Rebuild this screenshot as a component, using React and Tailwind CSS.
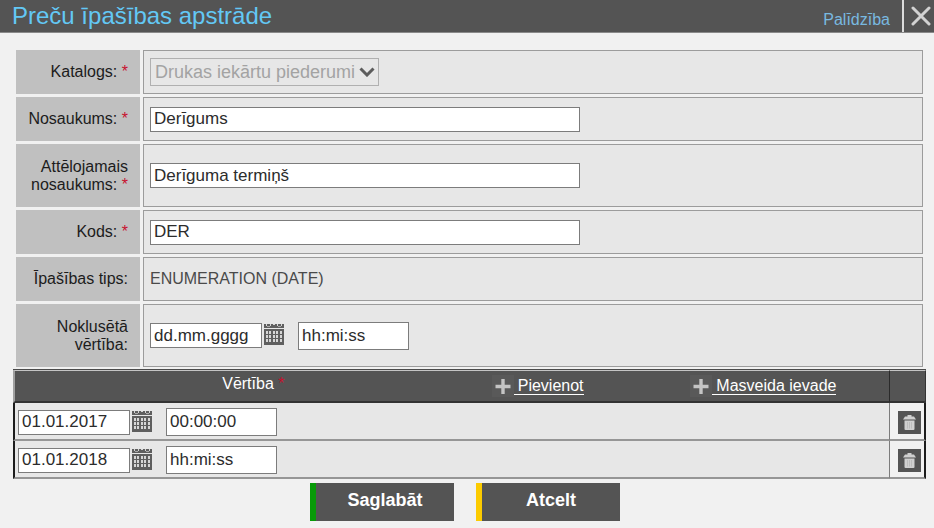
import { useState } from "react";

function CalendarIcon() {
  return (
    <svg width="20" height="21" viewBox="0 0 20 21" shapeRendering="crispEdges">
      <rect width="20" height="4" fill="#5f5f5f" />
      <g fill="#d6d6d6">
        <rect x="2" y="0" width="1" height="2" />
        <rect x="6" y="0" width="1" height="2" />
        <rect x="9" y="0" width="2" height="1" />
        <rect x="13" y="0" width="1" height="2" />
        <rect x="17" y="0" width="1" height="2" />
      </g>
      <g fill="#a8a8a8">
        <rect x="3" y="2" width="3" height="1" />
        <rect x="14" y="2" width="3" height="1" />
      </g>
      <rect x="0" y="5" width="20" height="16" fill="#5f5f5f" />
      <g fill="#d6d6d6">
        {[7, 11, 15].map((y) =>
          [2, 5, 9, 12, 16].map((x) => (
            <rect key={`${x}-${y}`} x={x} y={y} width="2" height="3" />
          ))
        )}
      </g>
    </svg>
  );
}

function PlusIcon() {
  return (
    <svg width="22" height="22" viewBox="0 0 22 22" className="shrink-0">
      <rect width="22" height="22" fill="#595959" />
      <path stroke="#c4c4c4" strokeWidth="3.4" d="M11 4v15M3.5 11.5h15" />
    </svg>
  );
}

function TrashIcon() {
  return (
    <svg width="23" height="23" viewBox="0 0 23 23">
      <rect width="23" height="23" fill="#545454" />
      <path fill="#d0d0d0" d="M9.500 4h4v1.500h2.500l2 3H5l2-3h2.500z" />
      <path fill="#d0d0d0" d="M6.500 9.500h10V18q0 1-1 1h-8q-1 0-1-1z" />
      <path stroke="#b8b8b8" strokeWidth="0.800" d="M9.500 11v6.500M11.500 11v6.500M13.500 11v6.500" />
    </svg>
  );
}

function CloseIcon() {
  return (
    <svg width="20" height="20" viewBox="0 0 20 20">
      <path
        stroke="#d2d2d2"
        strokeWidth="3"
        strokeLinecap="round"
        d="M2 2l16 16M18 2L2 18"
      />
    </svg>
  );
}

function Required() {
  return <span className="text-[#c8102e]">*</span>;
}

function Field({ id, label, required, tall, children }) {
  const height = tall ? "min-h-[63px]" : "min-h-11";
  return (
    <div className={`flex gap-[3px] ${height}`}>
      <div className="flex w-[124px] shrink-0 items-center justify-end bg-[#c0c0c0] pr-3 text-right text-base leading-[18px] text-[#1c1c1c]">
        <label htmlFor={id}>
          {label} {required && <Required />}
        </label>
      </div>
      <div className="flex flex-1 items-center border border-[#9c9c9c] bg-[#e7e7e7] px-1.5">
        {children}
      </div>
    </div>
  );
}

function TextInput({ id, value, onChange }) {
  return (
    <input
      id={id}
      type="text"
      value={value}
      onChange={(e) => onChange(e.target.value)}
      className="h-[25px] w-[430px] border border-[#7c7c7c] bg-white px-[3px] text-[17px] leading-5 text-[#2c2c2c]"
    />
  );
}

function DateTimeInput({ id, date, time, onChange, label }) {
  return (
    <div className="flex items-center">
      <input
        id={id}
        type="text"
        aria-label={label}
        value={date}
        onChange={(e) => onChange({ date: e.target.value, time })}
        className="h-[25px] w-28 border border-[#7c7c7c] bg-white px-[3px] text-[17px] leading-5 text-[#2c2c2c]"
      />
      <button type="button" aria-label="Kalendārs" className="mb-0.5 ml-0.5">
        <CalendarIcon />
      </button>
      <input
        type="text"
        aria-label="Laiks"
        value={time}
        onChange={(e) => onChange({ date, time: e.target.value })}
        className="ml-3.5 h-7 w-[111px] border border-[#7c7c7c] bg-white px-[3px] text-[17px] leading-5 text-[#2c2c2c]"
      />
    </div>
  );
}

function HeaderLink({ children }) {
  return (
    <div className="flex items-center">
      <PlusIcon />
      <a
        href="#"
        className="border-b border-white pl-1 text-base leading-[17px] text-white"
      >
        {children}
      </a>
    </div>
  );
}

function ActionButton({ accent, children }) {
  return (
    <button
      type="button"
      className={`h-[38px] w-36 border-l-6 bg-[#545454] pb-1 text-lg font-bold text-white ${accent}`}
    >
      {children}
    </button>
  );
}

function App() {
  const [name, setName] = useState("Derīgums");
  const [displayName, setDisplayName] = useState("Derīguma termiņš");
  const [code, setCode] = useState("DER");
  const [defaultValue, setDefaultValue] = useState({
    date: "dd.mm.gggg",
    time: "hh:mi:ss",
  });
  const [values, setValues] = useState([
    { id: 1, date: "01.01.2017", time: "00:00:00" },
    { id: 2, date: "01.01.2018", time: "hh:mi:ss" },
  ]);

  const updateValue = (id, next) => {
    setValues((prev) => prev.map((v) => (v.id === id ? { ...v, ...next } : v)));
  };

  const removeValue = (id) => {
    setValues((prev) => prev.filter((v) => v.id !== id));
  };

  return (
    <div className="min-h-screen bg-[#f1f1f1] font-['Liberation_Sans',Arial,sans-serif]">
      <header className="flex h-[33px] border-b border-[#8a8a8a] bg-[#545454]">
        <h1 className="flex-1 pl-3 text-2xl leading-8 text-[#63c8f5]">
          Preču īpašības apstrāde
        </h1>
        <a href="#" className="pt-2 pr-3 text-base text-[#79b9e0]">
          Palīdzība
        </a>
        <button
          type="button"
          aria-label="Aizvērt"
          className="flex w-8 items-center justify-end border-l-2 border-[#dcdcdc] pr-[3px]"
        >
          <CloseIcon />
        </button>
      </header>

      <form onSubmit={(e) => e.preventDefault()}>
        <div className="flex flex-col gap-[3px] pt-[17px] pr-[11px] pl-4">
          <Field id="catalog" label="Katalogs:" required>
            <div className="relative">
              <select
                id="catalog"
                disabled
                className="h-7 w-[229px] appearance-none border border-[#b0b0b0] bg-[#e7e7e7] pl-1 text-lg leading-5 text-[#a3a3a3]"
              >
                <option>Drukas iekārtu piederumi</option>
              </select>
              <svg
                width="16"
                height="10"
                viewBox="0 0 16 10"
                className="pointer-events-none absolute top-[9px] right-1"
              >
                <path fill="none" stroke="#5c5c5c" strokeWidth="3" d="M1.500 1.500L8 8l6.500-6.500" />
              </svg>
            </div>
          </Field>
          <Field id="name" label="Nosaukums:" required>
            <TextInput id="name" value={name} onChange={setName} />
          </Field>
          <Field id="display-name" label="Attēlojamais nosaukums:" required tall>
            <TextInput
              id="display-name"
              value={displayName}
              onChange={setDisplayName}
            />
          </Field>
          <Field id="code" label="Kods:" required>
            <TextInput id="code" value={code} onChange={setCode} />
          </Field>
          <Field id="type" label="Īpašības tips:">
            <output id="type" className="text-base text-[#4a4a4a]">
              ENUMERATION (DATE)
            </output>
          </Field>
          <Field id="default-date" label="Noklusētā vērtība:" tall>
            <DateTimeInput
              id="default-date"
              date={defaultValue.date}
              time={defaultValue.time}
              onChange={setDefaultValue}
            />
          </Field>
        </div>

        <div className="mt-0.5 pr-2 pl-[13px]">
          <table className="w-full border-separate border-spacing-0 border-t border-[#4a4a4a]">
            <thead>
              <tr className="bg-[#545454]">
                <th className="h-[33px] border-t border-b-2 border-l-2 border-t-[#c4c4c4] border-b-[#333333] border-l-[#a0a0a0] p-0 font-normal">
                  <div className="grid grid-cols-[12fr_5fr_5fr] items-center">
                    <span className="pb-1 text-base leading-5 text-white">
                      Vērtība <Required />
                    </span>
                    <HeaderLink>Pievienot</HeaderLink>
                    <HeaderLink>Masveida ievade</HeaderLink>
                  </div>
                </th>
                <th
                  aria-label="Dzēst"
                  className="w-[37px] border-t border-r border-b-2 border-l border-t-[#c4c4c4] border-r-[#333333] border-b-[#333333] border-l-[#2a2a2a] p-0"
                ></th>
              </tr>
            </thead>
            <tbody>
              {values.map((v) => (
                <tr key={v.id}>
                  <td className="h-[38px] border-b-2 border-l-2 border-b-[#969696] border-l-[#1c1c1c] bg-[#e7e7e7] pt-0.5 pr-0 pb-0 pl-[3px]">
                    <DateTimeInput
                      label="Vērtība"
                      date={v.date}
                      time={v.time}
                      onChange={(next) => updateValue(v.id, next)}
                    />
                  </td>
                  <td className="border-r-2 border-b-2 border-l border-r-[#1c1c1c] border-b-[#969696] border-l-[#7c7c7c] bg-[#f1f1f1] pt-0.5 pr-0 pb-0 pl-2">
                    <button
                      type="button"
                      aria-label="Dzēst"
                      onClick={() => removeValue(v.id)}
                      className="block"
                    >
                      <TrashIcon />
                    </button>
                  </td>
                </tr>
              ))}
            </tbody>
          </table>
        </div>

        <div className="flex justify-center gap-[22px] pt-1 pr-1">
          <ActionButton accent="border-[#079a07]">Saglabāt</ActionButton>
          <ActionButton accent="border-[#fccb00]">Atcelt</ActionButton>
        </div>
      </form>
    </div>
  );
}

export default App;
